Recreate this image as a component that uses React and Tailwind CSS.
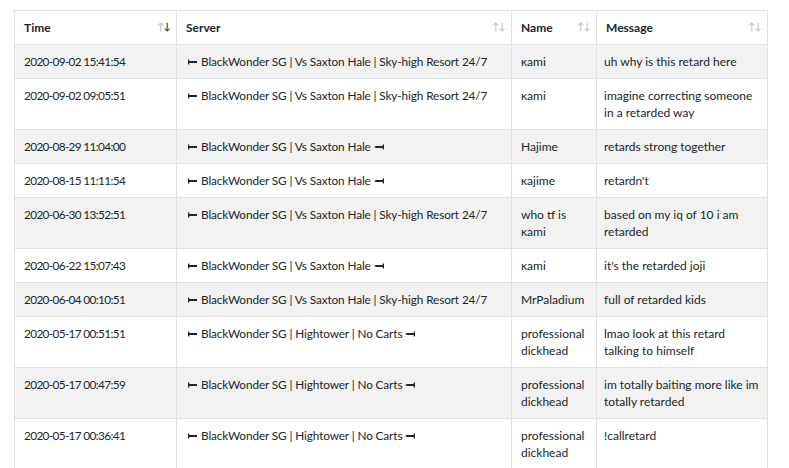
const rows = [
  { time: "2020-09-02 15:41:54", server: "BlackWonder SG | Vs Saxton Hale | Sky-high Resort 24/7", end: false, name: "κami", msg: "uh why is this retard here" },
  { time: "2020-09-02 09:05:51", server: "BlackWonder SG | Vs Saxton Hale | Sky-high Resort 24/7", end: false, name: "κami", msg: "imagine correcting someone in a retarded way" },
  { time: "2020-08-29 11:04:00", server: "BlackWonder SG | Vs Saxton Hale", end: true, name: "Hajime", msg: "retards strong together" },
  { time: "2020-08-15 11:11:54", server: "BlackWonder SG | Vs Saxton Hale", end: true, name: "κajime", msg: "retardn't" },
  { time: "2020-06-30 13:52:51", server: "BlackWonder SG | Vs Saxton Hale | Sky-high Resort 24/7", end: false, name: "who tf is κami", msg: "based on my iq of 10 i am retarded" },
  { time: "2020-06-22 15:07:43", server: "BlackWonder SG | Vs Saxton Hale", end: true, name: "κami", msg: "it's the retarded joji" },
  { time: "2020-06-04 00:10:51", server: "BlackWonder SG | Vs Saxton Hale | Sky-high Resort 24/7", end: false, name: "MrPaladium", msg: "full of retarded kids" },
  { time: "2020-05-17 00:51:51", server: "BlackWonder SG | Hightower | No Carts", end: true, name: "professional dickhead", msg: "lmao look at this retard talking to himself" },
  { time: "2020-05-17 00:47:59", server: "BlackWonder SG | Hightower | No Carts", end: true, name: "professional dickhead", msg: "im totally baiting more like im totally retarded" },
  { time: "2020-05-17 00:36:41", server: "BlackWonder SG | Hightower | No Carts", end: true, name: "professional dickhead", msg: "!callretard" },
];

const TackLeft = () => (
  <svg width="10" height="6" viewBox="0 0 10 6" className="inline-block mr-[3px] align-[1px]">
    <rect x="0" y="0.5" width="1.3" height="5" fill="#212529" />
    <rect x="0" y="2" width="9" height="2" fill="#212529" />
  </svg>
);

const TackRight = () => (
  <svg width="10" height="6" viewBox="0 0 10 6" className="inline-block ml-[3px] align-[1px]">
    <rect x="8.7" y="0.5" width="1.3" height="5" fill="#212529" />
    <path d="M0 3 L2 2 H10 V4 H2 Z" fill="#212529" />
  </svg>
);

const Sort = ({ active }) => (
  <span className="absolute right-[6px] top-[10px] text-[10px] leading-none tracking-[-1px]">
    <span className="text-[#c8c8c8]">↑</span>
    <span className={active ? "text-[#444]" : "text-[#c8c8c8]"}>↓</span>
  </span>
);

const headers = [
  { label: "Time", w: "w-[162px]", active: true },
  { label: "Server", w: "w-[335px]" },
  { label: "Name", w: "w-[85px]" },
  { label: "Message", w: "w-[171px]" },
];

export default function App() {
  return (
    <div className="w-[789px] h-[468px] overflow-hidden bg-white pt-[10px] pl-[14px] font-['Lato',sans-serif] text-[11.8px] text-[#212529]">
      <table className="table-fixed border-collapse w-[754px]">
        <thead>
          <tr>
            {headers.map((h) => (
              <th
                key={h.label}
                className={`${h.w} relative border border-[#dee2e6] h-[34px] pl-[9px] pr-[8px] pt-[1px] text-left align-middle font-bold text-[12px]`}
              >
                {h.label}
                <Sort active={h.active} />
              </th>
            ))}
          </tr>
        </thead>
        <tbody>
          {rows.map((r, i) => (
            <tr key={i} className={i % 2 === 0 ? "bg-[#f2f2f2]" : "bg-white"}>
              <td className="border border-[#dee2e6] pl-[9px] pr-[8px] py-[8px] align-top leading-[17px] tracking-[-0.65px]">{r.time}</td>
              <td className="border border-[#dee2e6] pl-[11px] pr-[8px] py-[8px] align-top leading-[17px] tracking-[-0.12px]">
                <TackLeft />
                {r.server}
                {r.end && <TackRight />}
              </td>
              <td className="border border-[#dee2e6] pl-[9px] pr-[6px] py-[8px] align-top leading-[17px] text-[12px]">{r.name}</td>
              <td className="border border-[#dee2e6] pl-[7px] pr-[6px] py-[8px] align-top leading-[17px] text-[12px]">{r.msg}</td>
            </tr>
          ))}
        </tbody>
      </table>
    </div>
  );
}
